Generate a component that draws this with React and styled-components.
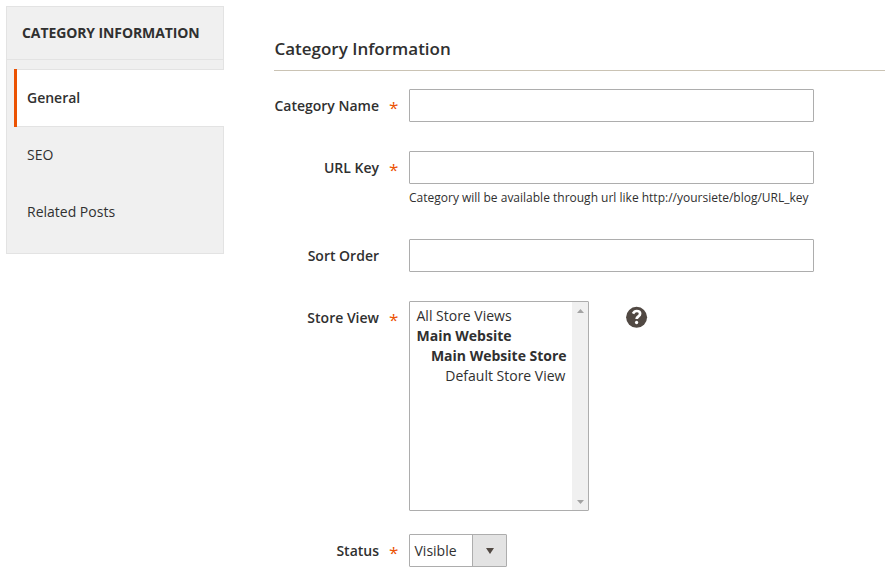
import React from "react";
import styled, { createGlobalStyle } from "styled-components";

const GlobalStyle = createGlobalStyle`
  *, *::before, *::after { box-sizing: border-box; }
  html, body { margin: 0; background: #fff; }
  body {
    font-family: "Open Sans", "Noto Sans", sans-serif;
    font-size: 14px;
    line-height: 20px;
    color: #303030;
    overflow: hidden;
  }
`;

const Page = styled.div`
  display: flex;
  align-items: flex-start;
  width: 885px;
  height: 588px;
  padding: 6px 0 0 6px;
  overflow: hidden;
`;

const Sidebar = styled.aside`
  flex: none;
  width: 218px;
  height: 248px;
  border: 1px solid #e3e3e3;
  background: #f0f0f0;
`;

const SidebarTitle = styled.div`
  height: 53px;
  padding: 16px 0 0 15px;
  border-bottom: 1px solid #e3e3e3;
  font-weight: 700;
  letter-spacing: -0.1px;
  white-space: nowrap;
`;

const Tabs = styled.nav`
  display: flex;
  flex-direction: column;
  padding-top: 9px;
`;

const Tab = styled.a`
  height: ${(p) => (p.$active ? 58 : 57)}px;
  margin: 0 ${(p) => (p.$active ? -1 : 0)}px 0 7px;
  padding: ${(p) => (p.$active ? "19px 0 0 10px" : "18px 0 0 13px")};
  font-weight: ${(p) => (p.$active ? 600 : 400)};
  background: ${(p) => (p.$active ? "#fff" : "transparent")};
  border-left: ${(p) => (p.$active ? "3px solid #eb5202" : "0")};
  box-shadow: ${(p) => (p.$active ? "inset 0 1px #e3e3e3, inset 0 -1px #e3e3e3" : "none")};
`;

const Content = styled.main`
  flex: none;
  width: 611px;
  margin-left: 50px;
`;

const Heading = styled.h2`
  height: 65px;
  margin: 0 0 18px;
  padding: 31px 0 0 0.4px;
  border-bottom: 1px solid #cac3b4;
  font-size: 17px;
  font-weight: 600;
  line-height: 24px;
`;

const Field = styled.div`
  display: grid;
  grid-template-columns: 105px 30px auto;
  margin-bottom: ${(p) => p.$gap ?? 29}px;
`;

const Label = styled.label`
  padding-top: 7px;
  text-align: right;
  font-weight: 600;
  white-space: nowrap;
`;

const Required = styled.span`
  padding: 9px 0 0 10px;
  color: #eb5202;
  font-size: 17px;
  font-weight: 400;
  line-height: 20px;
`;

const Control = styled.div`
  display: flex;
  flex-direction: ${(p) => (p.$row ? "row" : "column")};
  align-items: flex-start;
`;

const TextInput = styled.input`
  width: 405px;
  height: 33px;
  padding: 0 10px;
  border: 1px solid #adadad;
  border-radius: 1px;
  background: #fff;
  font: inherit;
  outline: none;
`;

const Note = styled.div`
  height: 26px;
  padding-top: 4px;
  font-size: 12px;
  white-space: nowrap;
`;

const StoreList = styled.div`
  display: flex;
  width: 180px;
  height: 210px;
  border: 1px solid #adadad;
  border-radius: 1px;
`;

const Options = styled.div`
  flex: 1;
  min-width: 0;
  padding-top: 4px;
`;

const Option = styled.div`
  height: 20px;
  padding-left: ${(p) => 6.5 + p.$level * 14.4}px;
  font-weight: ${(p) => (p.$group ? 700 : 400)};
  white-space: nowrap;
`;

const Scrollbar = styled.div`
  display: flex;
  flex-direction: column;
  justify-content: space-between;
  align-items: center;
  width: 16px;
  padding: 7px 0 6px 1px;
  background: #f0f0f0;
`;

const Arrow = styled.svg`
  display: block;
  fill: ${(p) => p.$color};
`;

const Help = styled.svg`
  display: block;
  margin: 5px 0 0 36px;
`;

const Select = styled.div`
  display: flex;
  width: 98px;
  height: 33px;
  border: 1px solid #adadad;
  border-radius: 1px;
`;

const SelectValue = styled.span`
  flex: 1;
  padding: 6px 0 0 4.5px;
`;

const SelectButton = styled.span`
  display: flex;
  align-items: center;
  justify-content: center;
  width: 34px;
  border-left: 1px solid #adadad;
  background: #e3e3e3;
`;

const tabs = ["General", "SEO", "Related Posts"];

const stores = [
  { name: "All Store Views", level: 0 },
  { name: "Main Website", level: 0, group: true },
  { name: "Main Website Store", level: 1, group: true },
  { name: "Default Store View", level: 2 },
];

function FormField({ label, required, gap, row, children }) {
  return (
    <Field $gap={gap}>
      <Label>{label}</Label>
      <Required>{required ? "*" : ""}</Required>
      <Control $row={row}>{children}</Control>
    </Field>
  );
}

export default function App() {
  return (
    <>
      <GlobalStyle />
      <Page>
        <Sidebar>
          <SidebarTitle>CATEGORY INFORMATION</SidebarTitle>
          <Tabs>
            {tabs.map((name, i) => (
              <Tab key={name} $active={i === 0}>{name}</Tab>
            ))}
          </Tabs>
        </Sidebar>
        <Content>
          <Heading>Category Information</Heading>
          <FormField label="Category Name" required>
            <TextInput />
          </FormField>
          <FormField label="URL Key" required>
            <TextInput />
            <Note>Category will be available through url like http://yoursiete/blog/URL_key</Note>
          </FormField>
          <FormField label="Sort Order">
            <TextInput />
          </FormField>
          <FormField label="Store View" required gap={23} row>
            <StoreList>
              <Options>
                {stores.map((s) => (
                  <Option key={s.name} $level={s.level} $group={s.group}>{s.name}</Option>
                ))}
              </Options>
              <Scrollbar>
                <Arrow $color="#a3a3a3" width="7" height="4" viewBox="0 0 7 4"><path d="M0 4 3.5 0 7 4Z" /></Arrow>
                <Arrow $color="#a3a3a3" width="7" height="4" viewBox="0 0 7 4"><path d="M0 0H7L3.5 4Z" /></Arrow>
              </Scrollbar>
            </StoreList>
            <Help width="23" height="23" viewBox="0 0 23 23">
              <circle cx="11.6" cy="11.3" r="10.5" fill="#514943" />
              <path d="M8 7.6C9 5.6 10.3 5 11.7 5c2.1 0 3.4 1.1 3.4 2.8 0 2.6-3.5 2.5-3.5 5.3" fill="none" stroke="#fff" strokeWidth="2.7" />
              <circle cx="11.6" cy="16.5" r="1.65" fill="#fff" />
            </Help>
          </FormField>
          <FormField label="Status" required gap={0}>
            <Select>
              <SelectValue>Visible</SelectValue>
              <SelectButton>
                <Arrow $color="#514943" width="8" height="6" viewBox="0 0 8 6"><path d="M0 0H8L4 6Z" /></Arrow>
              </SelectButton>
            </Select>
          </FormField>
        </Content>
      </Page>
    </>
  );
}
